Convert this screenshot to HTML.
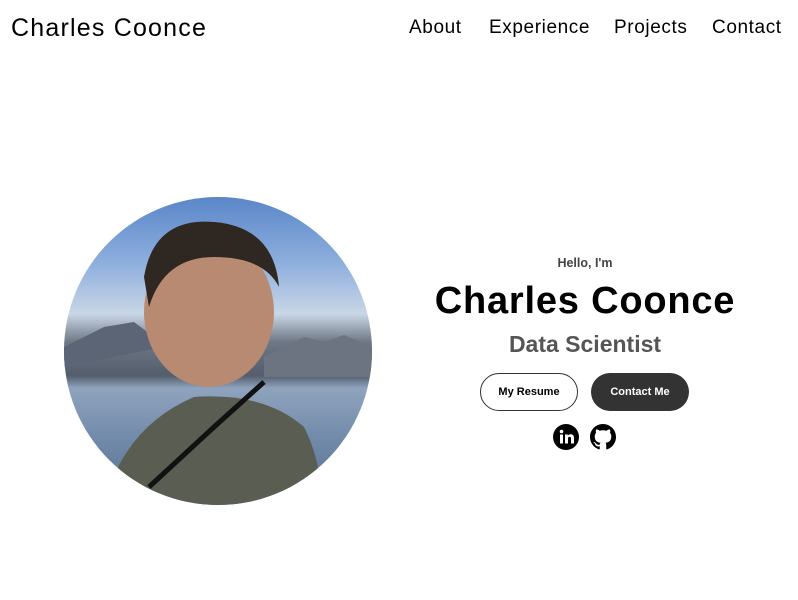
<!DOCTYPE html>
<html><head><style>
*{margin:0;padding:0;box-sizing:border-box}
body{width:798px;height:600px;background:#fff;font-family:"Liberation Sans",sans-serif;position:relative;overflow:hidden;color:#000}
.logo{position:absolute;left:11px;top:14px;font-size:25px;letter-spacing:1.2px}
.nav{position:absolute;top:17px;font-size:19px;letter-spacing:0.6px}
.photo{position:absolute;left:64px;top:197px;width:308px;height:308px;border-radius:50%;overflow:hidden;
background:linear-gradient(180deg,#5a86c8 0%,#8fb0de 22%,#c9d6e6 38%,#6f7886 47%,#535d6b 58%,#8fa3bd 62%,#6f88a8 80%,#56708f 100%)}
.c{position:absolute;text-align:center;white-space:nowrap}
.btn{position:absolute;top:373px;width:98px;height:38px;border-radius:19px;font-size:11px;font-weight:bold;display:flex;align-items:center;justify-content:center}
</style></head><body>
<div class="logo">Charles Coonce</div>
<div class="nav" style="left:409px">About</div>
<div class="nav" style="left:489px">Experience</div>
<div class="nav" style="left:614px">Projects</div>
<div class="nav" style="left:712px">Contact</div>
<div class="photo">
<div style="position:absolute;left:0;top:0;width:308px;height:308px">
<svg width="308" height="308" viewBox="0 0 308 308">
<path d="M0 150 L40 130 L70 125 L90 140 L100 150 L0 170Z" fill="#5b6575"/>
<path d="M200 160 L240 140 L260 145 L280 138 L308 150 L308 180 L200 180Z" fill="#6c7482"/>
<ellipse cx="145" cy="115" rx="65" ry="75" fill="#b98a72"/>
<path d="M80 80 Q90 20 150 25 Q210 30 215 90 Q200 60 150 60 Q100 60 85 110Z" fill="#2e2722"/>
<path d="M40 308 Q60 230 130 200 Q200 195 240 230 Q260 270 255 308Z" fill="#595d52"/>
<path d="M85 290 L150 230 L200 185" stroke="#111" stroke-width="5" fill="none"/>
</svg></div></div>
<div class="c" style="left:420px;width:330px;top:256px;font-size:12.5px;font-weight:bold;color:#444">Hello, I'm</div>
<div class="c" style="left:420px;width:330px;top:280px;font-size:38px;font-weight:bold;letter-spacing:0.8px">Charles Coonce</div>
<div class="c" style="left:420px;width:330px;top:331px;font-size:23px;font-weight:bold;color:#555">Data Scientist</div>
<div class="btn" style="left:480px;border:1.5px solid #333">My Resume</div>
<div class="btn" style="left:591px;background:#333;color:#fff">Contact Me</div>
<svg style="position:absolute;left:553px;top:424px" width="26" height="26" viewBox="0 0 26 26"><circle cx="13" cy="13" r="13" fill="#000"/><rect x="7" y="10.5" width="3" height="9" fill="#fff"/><circle cx="8.5" cy="7.5" r="1.8" fill="#fff"/><path d="M12 10.5h2.8v1.3c.6-1 1.7-1.5 2.9-1.5 2.3 0 3.3 1.4 3.3 3.9v5.3h-3v-4.8c0-1.2-.4-1.9-1.4-1.9s-1.6.7-1.6 1.9v4.8h-3z" fill="#fff"/></svg>
<svg style="position:absolute;left:590px;top:424px" width="26" height="26" viewBox="0 0 16 16"><path fill="#000" d="M8 0C3.58 0 0 3.58 0 8c0 3.54 2.29 6.53 5.47 7.59.4.07.55-.17.55-.38 0-.19-.01-.82-.01-1.49-2.01.37-2.530-.49-2.69-.94-.09-.23-.48-.94-.82-1.13-.28-.15-.68-.52-.01-.53.63-.01 1.08.58 1.23.82.72 1.21 1.87.87 2.330.66.07-.52.28-.87.51-1.07-1.78-.2-3.64-.89-3.64-3.95 0-.87.31-1.59.82-2.15-.08-.2-.36-1.02.08-2.12 0 0 .67-.21 2.2.82.64-.18 1.32-.27 2-.27.68 0 1.36.09 2 .27 1.53-1.04 2.2-.82 2.2-.82.44 1.1.16 1.92.08 2.12.51.56.82 1.27.82 2.15 0 3.07-1.87 3.75-3.65 3.95.29.25.54.73.54 1.48 0 1.07-.01 1.93-.01 2.2 0 .21.15.46.55.38A8.013 8.013 0 0016 8c0-4.42-3.58-8-8-8z"/></svg>
</body></html>
